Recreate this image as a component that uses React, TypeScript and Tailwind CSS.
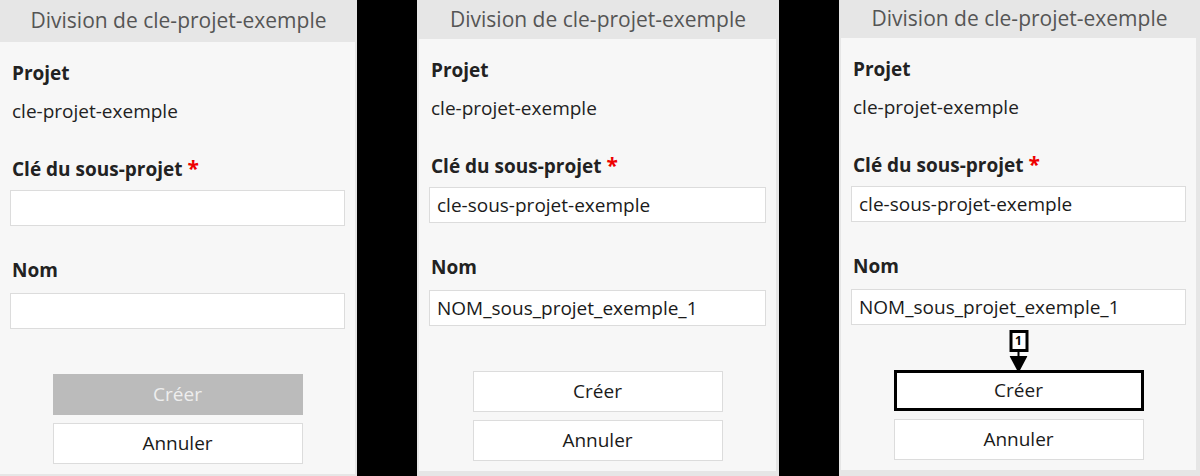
import { memo } from 'react';

type CreateState = 'disabled' | 'enabled' | 'highlighted';

interface PanelData {
  width: string;
  headerH: string;
  body: string;
  cle: string;
  nom: string;
  create: CreateState;
}

const panels: PanelData[] = [
  { width: 'w-[357px]', headerH: 'h-[42px]', body: 'ml-0 mr-[2px]', cle: '', nom: '', create: 'disabled' },
  { width: 'w-[362px]', headerH: 'h-[39px]', body: 'ml-[2px] mr-[3px]', cle: 'cle-sous-projet-exemple', nom: 'NOM_sous_projet_exemple_1', create: 'enabled' },
  { width: 'w-[361px]', headerH: 'h-[38px]', body: 'ml-[2px] mr-[4px]', cle: 'cle-sous-projet-exemple', nom: 'NOM_sous_projet_exemple_1', create: 'highlighted' },
];

function Field({ value }: { value: string }) {
  return (
    <div className="h-[36px] bg-white border border-[#dcdcdc] px-[7px] flex items-center text-[19px] text-[#1a1a1a]">
      {value}
    </div>
  );
}

function CreateButton({ state }: { state: CreateState }) {
  if (state === 'disabled') {
    return (
      <div className="w-[250px] h-[41px] bg-[#bbbbbb] text-[#eeeeee] flex items-center justify-center text-[19px]">
        Créer
      </div>
    );
  }
  if (state === 'highlighted') {
    return (
      <div className="relative w-[250px] h-[41px] bg-white border-[3px] border-black text-[#1a1a1a] flex items-center justify-center text-[19px]">
        Créer
        <div className="absolute left-1/2 -translate-x-1/2 bottom-full flex flex-col items-center">
          <div className="w-[19px] h-[22px] border-[3px] border-black bg-white flex items-center justify-center text-[12px] font-bold leading-none text-black">
            1
          </div>
          <div className="w-[2px] h-[4px] bg-black" />
          <svg width="18" height="17" viewBox="0 0 18 17">
            <path d="M0 0 L18 0 L9 17 Z" fill="black" />
          </svg>
        </div>
      </div>
    );
  }
  return (
    <div className="w-[250px] h-[41px] bg-white border border-[#dcdcdc] text-[#1a1a1a] flex items-center justify-center text-[19px]">
      Créer
    </div>
  );
}

const Panel = memo(function Panel({ data }: { data: PanelData }) {
  return (
    <div className={`${data.width} h-full bg-[#e6e6e6] flex flex-col shrink-0`}>
      <div className={`${data.headerH} flex items-center justify-center text-[21px] text-[#555555]`}>
        Division de cle-projet-exemple
      </div>
      <div className={`${data.body} h-[432px] bg-[#f7f7f7] px-[10px] pt-[19px] flex flex-col`}>
        <div className="h-[24px] leading-[24px] pl-[2px] font-bold text-[19px] text-[#222222]">Projet</div>
        <div className="mt-[14px] h-[24px] leading-[24px] pl-[2px] text-[19px] text-[#222222]">cle-projet-exemple</div>
        <div className="mt-[33px] h-[24px] leading-[24px] pl-[2px] font-bold text-[19px] text-[#222222]">
          Clé du sous-projet <span className="text-[#ee0000] text-[21px]">*</span>
        </div>
        <div className="mt-[10px]">
          <Field value={data.cle} />
        </div>
        <div className="mt-[32px] h-[24px] leading-[24px] pl-[2px] font-bold text-[19px] text-[#222222]">Nom</div>
        <div className="mt-[11px]">
          <Field value={data.nom} />
        </div>
        <div className="mt-[45px] flex flex-col items-center gap-[8px]">
          <CreateButton state={data.create} />
          <div className="w-[250px] h-[41px] bg-white border border-[#dcdcdc] text-[#1a1a1a] flex items-center justify-center text-[19px]">
            Annuler
          </div>
        </div>
      </div>
    </div>
  );
});

export default function App() {
  return (
    <div
      className="w-[1200px] h-[476px] bg-black flex gap-[60px] overflow-hidden"
      style={{ fontFamily: '"Open Sans", "Noto Sans", sans-serif' }}
    >
      {panels.map((p, i) => (
        <Panel key={i} data={p} />
      ))}
    </div>
  );
}
